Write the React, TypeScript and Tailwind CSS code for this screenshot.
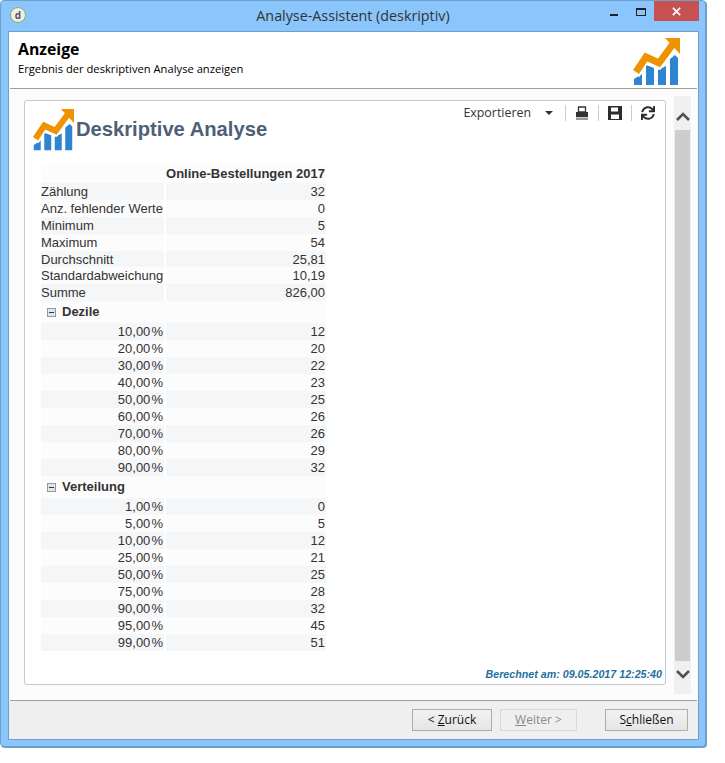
import { FaSync } from "react-icons/fa";

const SUMMARY = [
  ["Zählung", "32"],
  ["Anz. fehlender Werte", "0"],
  ["Minimum", "5"],
  ["Maximum", "54"],
  ["Durchschnitt", "25,81"],
  ["Standardabweichung", "10,19"],
  ["Summe", "826,00"],
];

const DEZILE = [
  ["10,00\u200a%", "12"],
  ["20,00\u200a%", "20"],
  ["30,00\u200a%", "22"],
  ["40,00\u200a%", "23"],
  ["50,00\u200a%", "25"],
  ["60,00\u200a%", "26"],
  ["70,00\u200a%", "26"],
  ["80,00\u200a%", "29"],
  ["90,00\u200a%", "32"],
];

const VERTEILUNG = [
  ["1,00\u200a%", "0"],
  ["5,00\u200a%", "5"],
  ["10,00\u200a%", "12"],
  ["25,00\u200a%", "21"],
  ["50,00\u200a%", "25"],
  ["75,00\u200a%", "28"],
  ["90,00\u200a%", "32"],
  ["95,00\u200a%", "45"],
  ["99,00\u200a%", "51"],
];

function ChartLogo({ className }: { className: string }) {
  return (
    <svg viewBox="0 0 48 48" className={className}>
      <g fill="#2f84d0">
        <path d="M2 47V41l8-5v11z" />
        <path d="M14 47V27l8 3v17z" />
        <path d="M26 47V32l8-4v19z" />
        <path d="M38 47V21l5-4 3 3v27z" />
      </g>
      <path d="M4 34 14 18l13 6L42 5" fill="none" stroke="#fff" strokeWidth="8" transform="translate(0 3)" />
      <path d="M4 34 14 19l13 6L41 6" fill="none" stroke="#ef9400" strokeWidth="7" />
      <path d="M33 0h15v16z" fill="#ef9400" />
    </svg>
  );
}

function Row({ label, value, shaded, right, short }: { label: string; value: string; shaded: boolean; right?: boolean; short?: boolean }) {
  const bg = shaded ? "bg-[#f5f6f8]" : "bg-[#fcfcfc]";
  return (
    <div className={`flex gap-[2px] leading-[17px] ${short ? "h-[16px]" : "h-[17px]"}`}>
      <div className={`w-[123px] whitespace-nowrap ${bg} ${right ? "pr-[1px] text-right" : ""}`}>{label}</div>
      <div className={`w-[160px] pr-[1px] text-right ${bg}`}>{value}</div>
    </div>
  );
}

function Group({ title }: { title: string }) {
  return (
    <div className="flex h-[22px] items-center bg-[#fcfcfc] pl-[6px] font-bold">
      <span className="mr-[6px] flex h-[9px] w-[9px] items-center justify-center border border-[#8a9aa8] bg-[#dfe6ec]">
        <span className="h-[1px] w-[5px] bg-[#333]" />
      </span>
      {title}
    </div>
  );
}

function WinButton({ pre, mnemonic, rest, disabled, width }: { pre?: string; mnemonic: string; rest: string; disabled?: boolean; width: string }) {
  return (
    <button
      className={`h-[22px] border text-[12px] ${width} ${
        disabled ? "border-[#d9d9d9] bg-[#efefef] text-[#8a8a8a]" : "border-[#adadad] bg-gradient-to-b from-[#f2f2f2] to-[#e5e5e5] text-[#111]"
      }`}
    >
      {pre}
      <span className="underline">{mnemonic}</span>
      {rest}
    </button>
  );
}

export default function App() {
  return (
    <div className="h-[763px] w-[725px] bg-white font-['Open_Sans',sans-serif]">
      <div className="flex h-[747px] w-[706px] flex-col rounded-[4px] border border-[#6f9fcb] bg-[#8ac5fb] shadow-[1px_1px_0_#6f9fcb]">
        {/* Title bar */}
        <div className="relative flex h-[30px] shrink-0 items-center justify-center text-[14.3px] text-[#333]">
          <span className="absolute left-[9px] top-[6px] flex h-[16px] w-[16px] items-center justify-center rounded-full border border-[#8fb04a] bg-[#eeeeee] text-[10px] font-bold leading-none text-[#555]">
            d
          </span>
          Analyse-Assistent (deskriptiv)
          <div className="absolute right-[6px] top-0 flex h-[20px] items-start">
            <span className="mr-[18px] mt-[13px] h-[2px] w-[8px] bg-[#222]" />
            <span className="mr-[8px] mt-[7px] h-[8px] w-[10px] border border-t-2 border-[#222]" />
            <div className="flex h-[20px] w-[45px] items-center justify-center bg-[#c75050]">
              <svg viewBox="0 0 10 10" className="h-[9px] w-[9px]">
                <path d="M1 1l8 8M9 1l-8 8" stroke="#fff" strokeWidth="2" />
              </svg>
            </div>
          </div>
        </div>

        {/* Client area */}
        <div className="ml-[7px] mr-[6px] flex min-h-0 flex-1 flex-col border border-[#6f9fcb] bg-white">
          <div className="flex h-[56px] shrink-0 justify-between bg-white pl-[9px] pr-[18px] pt-[6px]">
            <div>
              <div className="text-[15.8px] font-bold leading-[22px] text-black">Anzeige</div>
              <div className="text-[11.2px] leading-[18px] text-black">Ergebnis der deskriptiven Analyse anzeigen</div>
            </div>
            <ChartLogo className="h-[48px] w-[48px]" />
          </div>
          <div className="mx-[1px] h-[1px] shrink-0 bg-[#a0a0a0]" />

          <div className="flex min-h-0 flex-1 gap-[8px] bg-[#fcfcfc] pl-[15px] pr-[7px] pt-[7px]">
            {/* Result panel */}
            <div className="mt-[4px] flex h-[585px] w-[642px] flex-col rounded-[3px] border border-[#c8c8c8] bg-white font-['Liberation_Sans',sans-serif] text-[13px] text-[#333]">
              <div className="flex h-[50px] shrink-0 items-start justify-between pl-[7px] pr-[10px]">
                <div className="flex items-center pt-[8px]">
                  <ChartLogo className="h-[42px] w-[42px]" />
                  <span className="ml-[2px] mb-[2px] text-[20.2px] font-bold text-[#4d6078]">Deskriptive Analyse</span>
                </div>
                <div className="flex items-center pt-[3px] text-[#333]">
                  <span className="font-['Open_Sans',sans-serif] text-[12.4px]">Exportieren</span>
                  <span className="ml-[14px] mr-[12px] h-0 w-0 border-x-[4px] border-t-[4px] border-x-transparent border-t-[#333]" />
                  <span className="h-[16px] w-[1px] bg-[#ccc]" />
                  <svg viewBox="0 0 14 14" className="mx-[9px] h-[14px] w-[14px]">
                    <path d="M3.5 1h7v5h-7z" fill="none" stroke="#333" strokeWidth="1.3" />
                    <path d="M1 6h12v5H1z" fill="#333" />
                    <path d="M1 11.5h12V14H1z" fill="#9a9a9a" />
                  </svg>
                  <span className="h-[16px] w-[1px] bg-[#ccc]" />
                  <svg viewBox="0 0 14 14" className="mx-[9px] h-[14px] w-[14px]">
                    <path d="M0 0h14v14H0z" fill="#2d2d2d" />
                    <path d="M3 1.5h7v4H3z" fill="#fff" />
                    <path d="M3 8.5h8V13H3z" fill="#fff" />
                  </svg>
                  <span className="h-[16px] w-[1px] bg-[#ccc]" />
                  <FaSync className="ml-[9px] h-[14px] w-[14px] text-[#2d2d2d]" />
                </div>
              </div>

              <div className="ml-[16px] mt-[14px] w-[285px]">
                <div className="flex h-[18px] gap-[2px] bg-[#fcfcfc] font-bold leading-[17px]">
                  <div className="w-[123px]" />
                  <div className="w-[160px] whitespace-nowrap pr-[1px] text-right">Online-Bestellungen 2017</div>
                </div>
                {SUMMARY.map(([label, value], i) => (
                  <Row key={label} label={label} value={value} shaded={i % 2 === 0} short={label === "Durchschnitt"} />
                ))}
                <Group title="Dezile" />
                {DEZILE.map(([label, value], i) => (
                  <Row key={label} label={label} value={value} shaded={i % 2 === 0} right />
                ))}
                <Group title="Verteilung" />
                {VERTEILUNG.map(([label, value], i) => (
                  <Row key={label} label={label} value={value} shaded={i % 2 === 0} right />
                ))}
              </div>

              <div className="mt-auto pb-[2px] pr-[3px] text-right text-[10.7px] font-bold italic text-[#1f6f9f]">
                Berechnet am: 09.05.2017 12:25:40
              </div>
            </div>

            {/* Scrollbar */}
            <div className="flex h-[598px] w-[17px] flex-col items-center bg-[#f0f0f0]">
              <svg viewBox="0 0 14 9" className="mt-[16px] h-[9px] w-[14px]">
                <path d="M1 8l6-6 6 6" fill="none" stroke="#505050" strokeWidth="2.6" />
              </svg>
              <div className="mt-[9px] w-[15px] flex-1 bg-[#cdcdcd]" />
              <svg viewBox="0 0 14 9" className="mb-[15px] mt-[9px] h-[9px] w-[14px]">
                <path d="M1 1l6 6 6-6" fill="none" stroke="#505050" strokeWidth="2.6" />
              </svg>
            </div>
          </div>

          <div className="mx-[1px] h-[1px] shrink-0 bg-[#a0a0a0]" />
          <div className="flex h-[38px] shrink-0 items-start bg-[#efefef] pl-[403px] pt-[8px]">
            <WinButton pre="< " mnemonic="Z" rest="urück" width="w-[80px]" />
            <div className="w-[8px]" />
            <WinButton mnemonic="W" rest="eiter >" disabled width="w-[77px]" />
            <div className="w-[28px]" />
            <WinButton pre="S" mnemonic="c" rest="hließen" width="w-[83px]" />
          </div>
        </div>
        <div className="h-[6px] shrink-0" />
      </div>
    </div>
  );
}
